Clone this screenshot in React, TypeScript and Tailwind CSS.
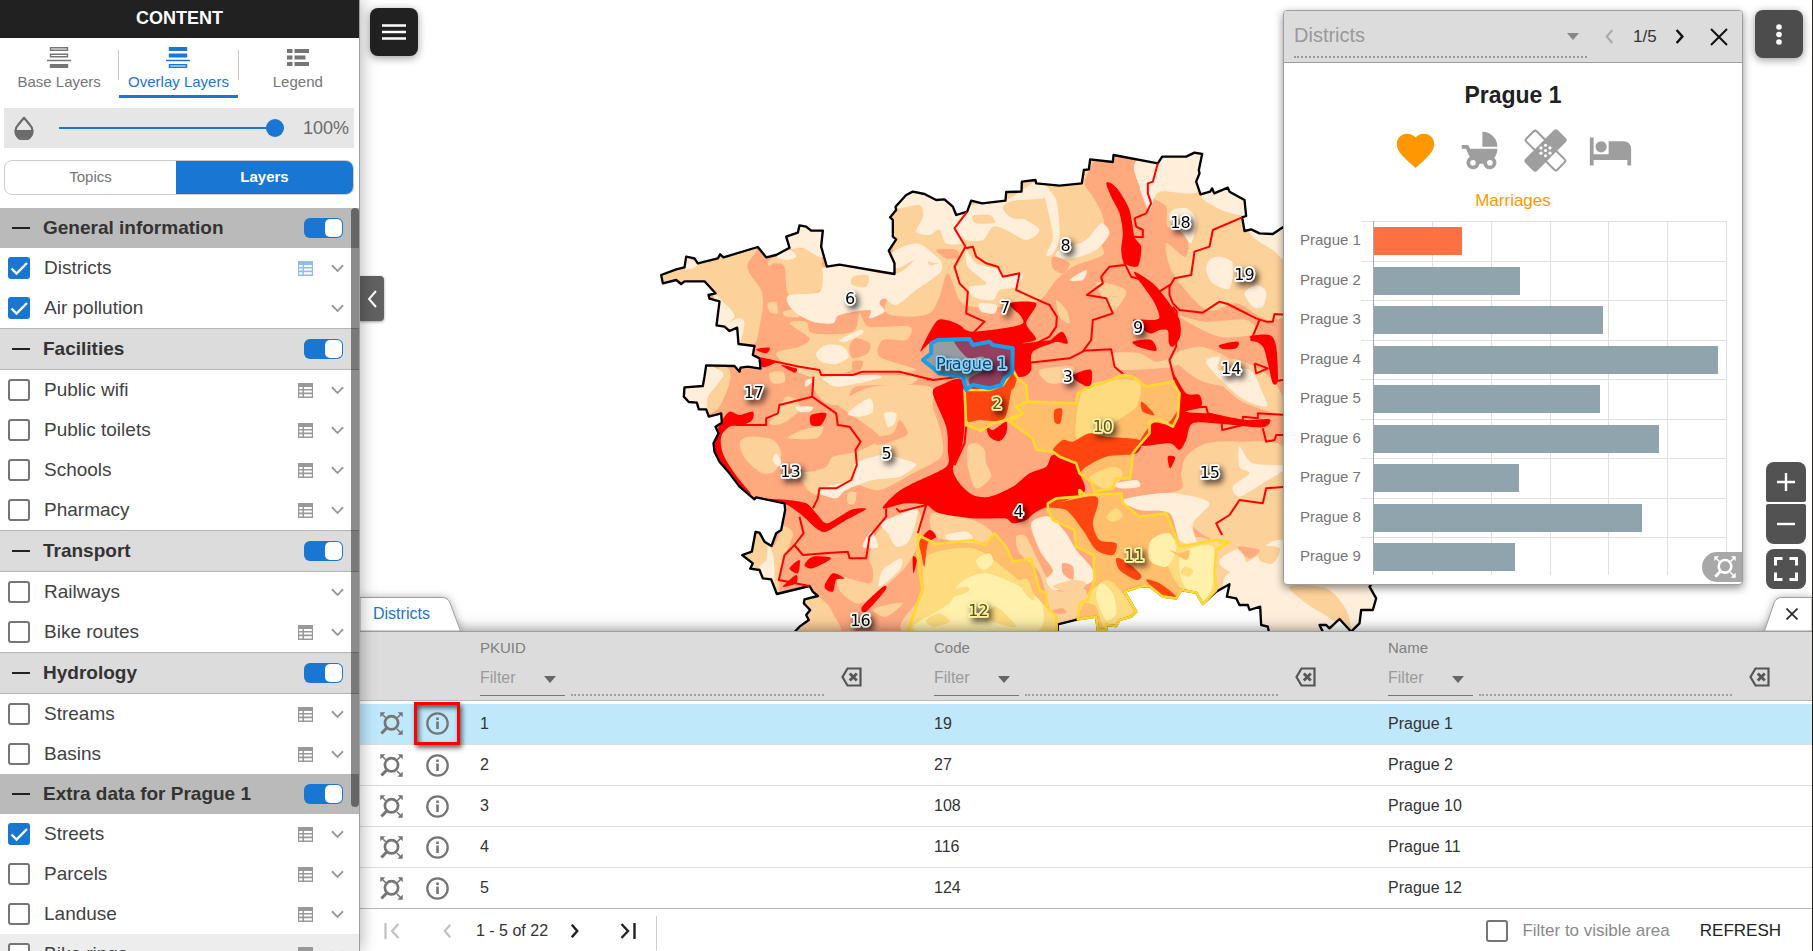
import React from "react";

/* ---------- map geometry helpers ---------- */

type Pt = [number, number];

const parse = (s: string): Pt[] =>
  s.trim().split(/\s+/).map((p) => p.split(",").map(Number) as Pt);

const line = (s: string) => "M" + s.trim().split(/\s+/).join("L");

function blob(s: string): string {
  const p = parse(s);
  const n = p.length;
  let d = `M${p[0][0]},${p[0][1]}`;
  for (let i = 0; i < n; i++) {
    const a = p[(i - 1 + n) % n];
    const b = p[i];
    const c = p[(i + 1) % n];
    const e = p[(i + 2) % n];
    const t = 7;
    d += `C${b[0] + (c[0] - a[0]) / t},${b[1] + (c[1] - a[1]) / t} ${c[0] - (e[0] - b[0]) / t},${c[1] - (e[1] - b[1]) / t} ${c[0]},${c[1]}`;
  }
  return d + "Z";
}

const OUTLINE =
  "65,405 70,430 110,420 125,432 135,424 195,424 228,460 207,465 210,476 240,484 231,556 255,560 270,573 293,563 297,612 345,618 340,645 360,655 363,686 325,680 303,683 300,695 285,678 200,676 195,710 190,738 135,742 133,770 148,786 172,788 178,808 200,808 208,830 245,820 247,848 228,860 237,880 222,910 225,935 240,965 270,1000 300,1040 345,1078 350,1072 435,1090 437,1110 425,1170 410,1180 396,1218 375,1205 360,1178 348,1176 337,1235 308,1245 340,1270 332,1286 360,1290 370,1315 395,1318 412,1362 510,1338 520,1355 535,1368 495,1378 493,1390 512,1410 500,1425 508,1440 480,1460 468,1473 468,1520 1255,1520 1255,1453 1315,1438 1370,1430 1375,1470 1400,1470 1400,1455 1430,1458 1440,1440 1475,1430 1490,1415 1455,1355 1500,1340 1530,1338 1570,1370 1610,1375 1625,1350 1670,1358 1690,1392 1730,1355 1770,1333 1762,1370 1790,1375 1800,1395 1825,1395 1830,1410 1862,1400 1865,1455 1885,1460 1888,1475 1888,1520 2060,1520 2050,1475 2040,1455 2060,1455 2070,1465 2100,1437 2135,1475 2160,1450 2165,1410 2200,1410 2210,1375 2190,1340 2300,1200 2300,500 1930,262 1900,282 1860,280 1835,268 1815,273 1808,232 1820,228 1815,180 1770,155 1765,143 1724,160 1718,145 1712,155 1683,163 1670,125 1680,100 1678,90 1688,42 1665,38 1640,50 1568,50 1555,70 1422,45 1420,66 1352,58 1348,88 1333,90 1327,130 1260,137 1190,130 1188,120 1147,125 1146,155 1100,156 1098,182 1028,190 995,182 983,215 950,225 940,200 915,178 890,180 855,162 820,155 800,165 768,200 770,210 752,232 760,240 760,290 770,298 748,332 765,370 765,402 600,374 562,380 545,320 550,272 515,272 500,260 480,256 475,278 440,290 450,323 410,345 380,352 355,321 252,352 242,343 235,355 175,370 165,355 140,350 135,382 110,388";

const TAN = [
  "50,400 240,350 350,325 325,370 330,400 365,450 370,500 360,560 345,612 290,620 240,520 195,424 70,440",
  "385,365 420,340 480,325 545,350 550,380 600,380 545,450 450,465 435,380 405,370 390,378",
  "750,150 1000,180 1340,50 1335,130 1360,170 1385,215 1395,260 1385,310 1390,345 1300,380 1250,420 1200,480 1100,500 1000,500 960,480 925,400 900,470 870,520 800,530 735,510 770,400",
  "1480,40 1600,60 1700,50 1950,250 1950,500 1900,540 1860,530 1790,490 1700,510 1600,400 1580,310 1640,350 1640,250 1585,260 1580,200 1540,170 1510,90",
  "450,550 500,545 520,580 640,575 660,520 690,560 810,560 800,600 730,600 720,650 830,690 700,700 640,690 560,720 460,690 410,640 480,620 510,595",
  "385,490 410,487 415,520 390,515",
  "430,515 460,510 480,530 440,530",
  "240,680 270,690 270,730 240,800 205,820 200,770",
  "390,700 430,695 435,725 400,730",
  "540,710 700,705 830,710 800,735 650,740 620,790 560,790 520,740",
  "420,800 440,770 470,780 480,810 430,850 390,850",
  "700,870 630,820 600,790 700,740 870,740 880,800 905,880 905,950 820,1000 720,1050 640,1030 600,1040 520,1060 490,1010 560,980 580,950 650,935 720,900",
  "300,910 330,890 400,900 425,940 410,990 370,1000 320,960",
  "445,895 490,870 550,860 530,895",
  "480,1000 600,1000 590,1040 530,1065",
  "625,1060 650,1058 645,1090 625,1090",
  "430,1160 460,1180 440,1240 420,1300 410,1370 300,1250 350,1170 400,1220",
  "510,1350 560,1390 580,1420 600,1480 460,1480 480,1380",
  "600,1310 690,1330 700,1290 690,1250 720,1170 830,1110 845,1170 830,1230 790,1290 700,1370 650,1390 600,1350",
  "700,1410 740,1395 790,1390 740,1430",
  "860,1250 1000,1225 1100,1290 1200,1380 1250,1480 800,1480 850,1360",
  "1130,1190 1160,1190 1190,1250 1250,1350 1340,1350 1310,1430 1250,1460 1200,1300 1140,1240",
  "985,920 1010,910 1035,930 1040,970 1055,1010 1010,1045 985,980",
  "880,1120 1000,1140 1060,1180 1020,1210 890,1190",
  "1330,750 1420,720 1500,730 1490,800 1420,850 1370,900 1310,890",
  "1350,1010 1420,980 1450,1000 1420,1050 1380,1040",
  "1600,1200 1660,1190 1720,1210 1730,1330 1700,1390 1620,1340 1580,1260",
  "1400,1130 1430,1105 1450,1130 1420,1145",
  "1330,1380 1400,1320 1450,1360 1490,1415 1400,1465 1370,1400",
  "1640,950 1700,910 1800,905 1940,930 1940,1180 1800,1200 1700,1190 1600,1110 1480,1080 1620,1050 1625,1000",
  "1720,1150 1800,1070 1940,1050 1940,1480 1700,1480",
  "1600,650 1680,620 1760,650 1800,700 1780,740 1680,720",
  "1620,530 1700,545 1820,540 1850,580 1740,590",
  "1370,430 1440,440 1460,460 1420,510",
  "1420,640 1500,640 1550,665 1620,650 1600,680 1440,690 1420,670",
  "1200,690 1300,680 1290,720 1230,730",
  "1700,670 1800,660 1900,720 1940,820 1800,780",
  "1250,480 1280,510 1290,550 1260,530",
  "1020,790 1060,780 1050,830 1025,820",
];

const SALMON = [
  "890,330 950,330 955,355 920,355",
  "1240,350 1290,370 1270,400 1240,385",
  "630,620 650,595 690,610 685,640 640,655",
  "640,665 670,665 660,695 640,695",
  "580,560 640,535 640,570 600,580",
  "700,895 760,880 780,840 805,880 770,900 715,915",
  "1270,1270 1300,1280 1300,1320 1270,1300",
  "1240,1410 1270,1405 1280,1420 1245,1420",
  "1590,1230 1620,1240 1650,1230 1640,1260",
  "1795,1220 1860,1230 1830,1255",
];

const CREAM = [
  "130,350 175,370 160,385 130,385",
  "200,430 235,470 275,510 285,530 270,545 300,535 315,550 300,615 285,580 215,570 225,480",
  "435,285 475,250 555,270 550,350 490,325 450,325",
  "410,348 450,330 470,350 440,360",
  "550,385 600,374 765,402 850,340 870,375 905,370 900,400 830,450 770,495 735,475 720,490 735,515 690,535 690,510 600,525 580,550 520,545 470,520 445,490 450,465 540,455 550,400",
  "765,170 820,150 900,175 940,205 980,220 960,240 945,270 965,310 920,310 900,270 870,285 830,275 850,230 840,195 775,205",
  "755,340 830,310 880,340 905,370 830,360 770,385",
  "530,640 560,615 610,620 628,650 590,672 545,665",
  "600,600 660,570 670,580 620,605",
  "130,745 195,700 200,676 240,690 250,710 205,770 200,810 150,795",
  "560,712 700,705 720,715 600,740 560,725",
  "470,800 520,800 510,815 480,815",
  "650,970 730,945 800,960 830,975 780,1010 700,1020 620,1050 590,1075 540,1060 560,1040 640,1020",
  "625,820 690,775 700,815 660,830",
  "735,820 770,820 765,850 745,860",
  "400,960 410,940 425,965 415,980",
  "385,1220 400,1240 405,1300 400,1350 370,1310 360,1280 380,1260",
  "725,1150 800,1115 835,1110 810,1200 770,1220 745,1180",
  "720,1340 730,1290 785,1255 780,1290",
  "670,1220 695,1175 715,1220",
  "920,1185 980,1175 1000,1200 930,1200",
  "1175,1150 1230,1130 1280,1180 1310,1230 1360,1290 1350,1330 1250,1350 1220,1320 1240,1290 1200,1230",
  "960,1330 1040,1300 1160,1350 1210,1400 1180,1480 900,1480 820,1460 930,1390",
  "1010,1260 1050,1240 1060,1270 1030,1290",
  "985,200 1100,180 1190,125 1230,150 1210,175 1110,185 1100,210 1150,235 1200,270 1160,300 1100,270 1060,260 1030,300 980,300 945,260",
  "1210,140 1250,180 1260,290 1240,340 1220,345 1240,290 1225,210",
  "980,330 1010,370 1080,390 1090,410 1150,400 1130,440 1080,450 1060,480 1000,470 990,440 1040,430 985,380",
  "1020,490 1070,495 1065,520 1025,515",
  "1320,310 1350,290 1385,250 1410,280 1370,330 1300,355 1250,350 1260,330",
  "1495,60 1690,40 1675,155 1560,155 1530,210 1500,140",
  "1600,210 1640,205 1670,240 1655,310 1630,280 1590,240",
  "1690,165 1765,140 1825,185 1820,225 1760,215 1700,185",
  "1820,240 1940,260 1940,360 1900,330 1840,290",
  "1710,360 1740,350 1780,370 1770,445 1720,430 1700,390",
  "1815,460 1850,435 1880,455 1870,500 1840,500",
  "1450,1080 1560,1060 1640,1065 1710,1090 1660,1150 1670,1210 1620,1200 1590,1120 1500,1110",
  "1800,920 1840,970 1940,980 1870,1030 1800,1070 1780,1040 1830,1000 1800,980",
  "1430,1030 1490,1020 1500,1040 1440,1045",
  "1625,1240 1720,1220 1720,1330 1690,1385 1630,1330",
  "1535,1200 1590,1180 1610,1230 1580,1280 1530,1260",
  "1385,1330 1420,1360 1430,1420 1400,1440 1370,1370",
  "1750,1330 1850,1250 1940,1200 2300,1300 2200,1530 1870,1480",
  "1740,1260 1800,1230 1830,1310 1760,1290",
  "1700,670 1740,650 1740,690 1830,690 1870,760 1880,800 1800,770",
  "500,720 530,715 500,740",
  "1290,420 1340,390 1330,420",
];

const TAN_OVER = [
  "640,410 685,406 680,440 638,434",
  "1000,228 1050,225 1065,248 1010,250",
  "1090,200 1140,180 1190,190 1190,230 1120,235",
  "920,1355 980,1340 985,1355 930,1372",
  "1040,1430 1070,1400 1130,1460 1060,1445",
  "1140,1325 1165,1320 1185,1380 1160,1365",
  "860,1440 900,1420 930,1445 880,1460",
  "1635,1280 1660,1290 1650,1310 1625,1300",
  "1950,1340 2060,1345 2120,1410 2132,1480 2080,1440 2000,1390",
  "1860,1220 1920,1225 1900,1270 1860,1260",
  "1240,1340 1300,1320 1340,1330 1310,1360",
];

const RED = [
  "843,633 890,545 925,541 960,555 1000,575 1140,555 1145,530 1110,490 1190,490 1160,550 1190,597 1150,610 1260,600 1180,635 1175,690 1150,710 1110,700 1110,620 980,600 880,605",
  "945,600 1000,590 1130,615 1125,740 1060,760 1000,740 990,715 1050,680 1030,650 990,655 965,635",
  "730,1105 770,1060 820,1030 920,980 925,930 920,860 880,760 905,735 970,722 975,850 965,930 940,985 960,1030 1000,1065 1050,1070 1120,1040 1170,1000 1220,980 1240,945 1300,950 1320,990 1325,1010 1330,1060 1200,1110 1160,1140 1120,1150 1095,1135 1000,1135 900,1120 860,1095 800,1090",
  "245,845 270,815 300,825 340,815 338,840 310,855 270,860 245,890 250,940 285,1000 330,1055 345,1072 445,1080 500,1090 530,1120 560,1150 600,1130 640,1108 680,1107 620,1140 560,1175 530,1165 480,1120 430,1090 340,1080 270,1000 225,930 230,880",
  "1400,130 1415,130 1440,155 1470,210 1485,290 1505,320 1495,378 1455,370 1445,330 1450,280 1440,220 1415,170",
  "1483,397 1540,430 1590,490 1620,540 1622,590 1600,620 1588,610 1585,572 1560,570 1530,580 1480,540 1540,540 1560,530 1540,480",
  "1480,605 1535,600 1550,632 1500,622",
  "1830,590 1890,585 1910,620 1915,720 1900,730 1885,670 1870,620",
  "1740,615 1795,605 1790,625 1750,627",
  "1600,700 1640,760 1680,765 1685,800 1640,815 1720,822 1820,840 1890,838 1870,862 1750,852 1660,850 1640,900 1620,930 1590,910 1500,915 1540,850 1585,850 1620,790",
  "1240,930 1270,900 1300,905 1350,880 1400,890 1500,900 1490,940 1400,950 1340,980 1310,1000 1250,950",
  "1220,1100 1370,1070 1360,1150 1380,1200 1430,1210 1420,1245 1370,1230 1330,1170 1280,1110",
  "1430,1255 1460,1265 1505,1305 1490,1320 1440,1290",
  "1520,1320 1560,1330 1610,1370 1560,1360",
  "975,750 1060,735 1115,715 1110,780 1090,840 1020,840 980,840",
  "1040,855 1060,870 1100,845 1100,880 1080,903 1050,890",
  "1245,810 1268,808 1262,850 1245,845",
  "1505,785 1525,800 1545,825 1510,815",
  "350,628 390,623 380,640",
  "365,655 410,665 370,682",
  "425,675 470,685 465,698",
  "668,1400 730,1340 738,1350 680,1415",
  "555,1340 580,1300 615,1315 590,1320 580,1355",
  "495,1275 520,1250 575,1255 520,1285",
  "450,1285 480,1260 475,1300",
  "430,1340 470,1305 470,1330",
  "515,825 560,820 545,855 515,855",
  "820,1250 832,1260 822,1300",
  "840,1205 870,1170 890,1190 865,1210 855,1280 845,1240",
  "1310,700 1355,690 1350,740 1300,715",
  "1230,605 1268,575 1285,610 1255,605",
  "1585,950 1607,952 1592,985",
  "860,715 875,715 865,722",
];

const RED_LINES = [
  "983,215 945,265 978,320 945,380 960,430 985,455 980,520 1035,545 1000,580",
  "978,325 1000,320 1010,350 1040,370 1075,380 1090,410 1140,400 1130,450 1185,475 1230,495 1252,530 1250,560 1230,590 1170,620",
  "1555,70 1540,125 1525,130 1525,160 1535,190 1520,220 1485,235 1490,260 1510,270 1510,292 1480,290",
  "1455,350 1455,375 1410,380 1385,410 1390,430 1342,465 1400,475 1420,520 1360,540 1355,600 1330,635 1290,655 1170,668",
  "1455,370 1475,410 1510,420 1560,455 1590,435 1590,465 1600,490 1620,510 1690,518 1740,485 1765,492 1850,535 1880,545 1900,545 1905,522 1940,524",
  "1808,232 1720,270 1710,320 1665,335 1655,405 1605,415 1590,440",
  "1600,500 1612,515 1610,620 1590,660 1605,720",
  "1330,632 1415,628 1425,680 1455,705",
  "1860,540 1835,600 1870,605",
  "1845,670 1885,685 1850,700 1845,670",
  "1900,725 1940,718",
  "363,655 480,680 540,690 545,705 640,705 670,695 780,695 880,720 960,710",
  "522,710 518,770 420,795 415,820 380,835 380,855 290,855",
  "518,770 590,820 595,855 630,860 663,905 648,930 652,975 635,1020 590,1045 540,1045 535,1075 520,1105",
  "480,1130 492,1180 465,1215 490,1245 555,1240 625,1235 630,1255 680,1255 690,1190 715,1160 740,1130 740,1105",
  "465,1215 435,1245 418,1320 510,1338",
  "770,1105 780,1115 860,1095 835,1180",
  "980,860 975,910 945,975",
  "1635,805 1700,800 1705,820 1745,830 1748,870 1810,855 1810,830 1855,835 1855,820 1940,825",
  "1870,865 1880,905 1905,900 1910,885 1940,885",
  "1940,1040 1880,1045 1870,1090 1800,1080 1770,1125 1730,1150 1748,1185",
];

const YELLOW = [
  "1165,785 1310,790 1315,760 1340,745 1400,725 1450,705 1480,710 1520,740 1600,725 1620,760 1615,830 1600,860 1560,840 1530,845 1530,880 1500,915 1480,940 1472,1015 1430,1015 1420,1045 1365,1055 1355,1025 1320,1000 1310,970 1260,950 1240,935 1190,930 1180,895 1110,845 1150,820 1130,800",
  "975,750 1050,750 1090,735 1120,690 1135,715 1160,735 1165,785 1130,800 1150,820 1100,840 1060,850 1025,872 980,855",
  "1225,1090 1250,1075 1320,1070 1320,1050 1335,1065 1445,1060 1450,1090 1500,1130 1580,1120 1600,1170 1620,1220 1730,1200 1770,1205 1730,1230 1725,1300 1730,1350 1690,1392 1670,1358 1625,1350 1610,1375 1570,1370 1530,1338 1500,1340 1455,1355 1490,1415 1475,1430 1440,1440 1430,1458 1400,1455 1400,1470 1375,1470 1370,1430 1315,1438 1320,1390 1345,1380 1365,1320 1362,1245 1310,1220 1305,1170 1240,1140 1225,1110",
  "835,1185 890,1212 1000,1200 1035,1215 1065,1180 1100,1220 1120,1265 1175,1255 1200,1350 1220,1360 1222,1400 1250,1430 1255,1520 790,1520 830,1400 848,1350 835,1250",
];

const PRAGUE1 =
  "875,610 895,600 990,597 1000,615 1050,605 1060,615 1120,625 1118,695 1095,715 1085,735 1050,745 1000,735 980,750 970,710 900,700 875,680 850,660 875,640";

const LABELS: [string, number, number, string][] = [
  ["6", 632, 476, "#000"],
  ["18", 1623, 248, "#000"],
  ["8", 1278, 316, "#000"],
  ["7", 1097, 502, "#000"],
  ["9", 1496, 563, "#000"],
  ["19", 1815, 405, "#000"],
  ["14", 1775, 685, "#000"],
  ["3", 1285, 711, "#000"],
  ["17", 343, 757, "#000"],
  ["5", 741, 942, "#000"],
  ["13", 453, 995, "#000"],
  ["16", 663, 1443, "#000"],
  ["4", 1137, 1115, "#000"],
  ["15", 1711, 998, "#000"],
  ["2", 1073, 792, "#5b5514"],
  ["10", 1390, 860, "#5b5514"],
  ["11", 1484, 1246, "#5b5514"],
  ["12", 1017, 1413, "#5b5514"],
  ["Prague 1", 996, 672, "#0e4a6b"],
];

const halo = (c: string) => (c === "#000" ? "#fff" : c === "#0e4a6b" ? "#8fd3fa" : "#fff3a6");

function PragueMap() {
  return (
    <svg
      className="absolute inset-0 h-full w-full"
      viewBox="-840 -420 4359 1893"
      preserveAspectRatio="xMidYMid slice"
      role="img"
      aria-label="Map of Prague districts"
    >
      <defs>
        <clipPath id="city">
          <path d={line(OUTLINE) + "Z"} />
        </clipPath>
        <filter id="label-shadow" x="-100%" y="-50%" width="300%" height="250%">
          <feDropShadow dx="9" dy="11" stdDeviation="9" floodColor="#000" floodOpacity="0.75" />
        </filter>
      </defs>
      <g clipPath="url(#city)">
        <path d={line(OUTLINE) + "Z"} fill="#ffa97f" />
        {TAN.map((s) => <path key={s} d={blob(s)} fill="#fdd19a" />)}
        {CREAM.map((s) => <path key={s} d={blob(s)} fill="#ffeeda" />)}
        {TAN_OVER.map((s) => <path key={s} d={blob(s)} fill="#fdd19a" />)}
        {SALMON.map((s) => <path key={s} d={blob(s)} fill="#ffa97f" />)}
        {RED.map((s) => <path key={s} d={blob(s)} fill="#f00" />)}
      </g>
      <path d={line(OUTLINE) + "Z"} fill="none" stroke="#000" strokeWidth="7" strokeLinejoin="round" />
      <g fill="none" stroke="#f00" strokeWidth="6" strokeLinejoin="round">
        {RED_LINES.map((s) => <path key={s} d={line(s)} />)}
      </g>
      <g fill="#fff638" fillOpacity="0.284" stroke="#ffd92f" strokeWidth="8" strokeLinejoin="round">
        {YELLOW.map((s) => <path key={s} d={line(s) + "Z"} />)}
      </g>
      <path d={line(PRAGUE1) + "Z"} fill="#168ed5" fillOpacity="0.45" stroke="#1c9fe6" strokeWidth="12" strokeLinejoin="round" />
      <g fontFamily="'DejaVu Sans', sans-serif" fontSize="48" textAnchor="middle">
        {LABELS.map(([t, x, y, c]) => (
          <text key={t} x={x} y={y + 16} fill={c} stroke={halo(c)} strokeWidth="10" strokeLinejoin="round" paintOrder="stroke" filter="url(#label-shadow)">
            {t}
          </text>
        ))}
      </g>
    </svg>
  );
}

/* ---------- icons ---------- */

const Chevron = ({ dir, className, w = 2 }: { dir: "left" | "right" | "down"; className: string; w?: number }) => {
  const d = { left: "M9 1L2 9l7 8", right: "M2 1l7 8-7 8", down: "M1 1l6 6 6-6" }[dir];
  return (
    <svg className={className} viewBox={dir === "down" ? "0 0 14 9" : "0 0 11 18"} fill="none" stroke="currentColor" strokeWidth={w}>
      <path d={d} />
    </svg>
  );
};

const Caret = ({ className }: { className: string }) => (
  <svg className={className} viewBox="0 0 12 7" fill="currentColor">
    <path d="M0 0h12L6 7z" />
  </svg>
);

const ZoomTo = ({ className }: { className: string }) => (
  <svg className={className} viewBox="0 0 23 23" fill="none" stroke="currentColor">
    <circle cx="11.5" cy="10.8" r="6.6" strokeWidth="2.7" />
    <path d="M7.2 15.4l-5.800 6.200" strokeWidth="3" />
    <path d="M1.500 1.500l4.200 4.200M21.500 1.500l-4.200 4.200M21.500 21.500l-4.500-4.500" strokeWidth="1.600" />
    <path d="M.3.3h5l-5 5zM22.700.3v5l-5-5zM22.700 22.700h-5.200l5.200-5.200z" fill="currentColor" stroke="none" />
  </svg>
);

const Info = ({ className }: { className: string }) => (
  <svg className={className} viewBox="0 0 23 23" fill="none" stroke="currentColor">
    <circle cx="11.5" cy="11.5" r="10.2" strokeWidth="2.3" />
    <path d="M11.500 9.500v7.500M11.500 5.500v2.500" strokeWidth="2.600" />
  </svg>
);

const TableIcon = ({ className }: { className: string }) => (
  <svg className={className} viewBox="0 0 15 15">
    <path d="M0 0h15v15H0z" fill="currentColor" />
    <path d="M1.200 4h3.300v2H1.200zM6 4h7.800v2H6zM1.200 7.500h3.300v2H1.200zM6 7.500h7.800v2H6zM1.200 11.200h3.300v2.300H1.200zM6 11.200h7.800v2.300H6z" fill="#fff" />
  </svg>
);

const Backspace = () => (
  <svg className="h-[20px] w-[21px]" viewBox="0 0 21 20" fill="none" stroke="#555" strokeWidth="2.200">
    <path d="M6.500 1.500H19.500v17H6.500L1.500 10z" />
    <path d="M8.800 6.500l7 7M15.800 6.500l-7 7" strokeWidth="2.800" />
  </svg>
);

/* ---------- controls ---------- */

function Check({ id, checked }: { id: string; checked?: boolean }) {
  return (
    <span className="relative flex h-[22px] w-[22px] shrink-0">
      <input
        id={id}
        type="checkbox"
        defaultChecked={checked}
        className="peer h-[22px] w-[22px] appearance-none rounded-[3px] border-2 border-[#757575] bg-white checked:border-[#1976d2] checked:bg-[#1976d2]"
      />
      <svg className="pointer-events-none absolute inset-0 hidden peer-checked:block" viewBox="0 0 22 22" fill="none" stroke="#fff" strokeWidth="2.400">
        <path d="M3.500 11.500l5 5L19 6" />
      </svg>
    </span>
  );
}

type Row = { name: string; checked?: boolean; table?: "blue" | "gray" };
type Group = { name: string; dark?: boolean; rows: Row[] };

const GROUPS: Group[] = [
  { name: "General information", dark: true, rows: [{ name: "Districts", checked: true, table: "blue" }, { name: "Air pollution", checked: true }] },
  {
    name: "Facilities",
    rows: [
      { name: "Public wifi", table: "gray" },
      { name: "Public toilets", table: "gray" },
      { name: "Schools", table: "gray" },
      { name: "Pharmacy", table: "gray" },
    ],
  },
  { name: "Transport", rows: [{ name: "Railways" }, { name: "Bike routes", table: "gray" }] },
  { name: "Hydrology", rows: [{ name: "Streams", table: "gray" }, { name: "Basins", table: "gray" }] },
  {
    name: "Extra data for Prague 1",
    dark: true,
    rows: [
      { name: "Streets", checked: true, table: "gray" },
      { name: "Parcels", table: "gray" },
      { name: "Landuse", table: "gray" },
      { name: "Bike rings", table: "gray" },
    ],
  },
];

function LayerGroup({ group }: { group: Group }) {
  return (
    <section>
      <header
        className={
          group.dark
            ? "flex h-10 items-center bg-[#bababa] pl-3 pr-4"
            : "flex h-[42px] items-center border-y border-[#b5b5b5] bg-[#dcdcdc] pl-3 pr-4"
        }
      >
        <button aria-label={"Collapse " + group.name} className="h-5 w-[18px]">
          <span className="block h-[2px] bg-[#212121]" />
        </button>
        <h2 className="ml-[13px] flex-1 text-[19px] font-bold leading-6 text-[#333]">{group.name}</h2>
        <input
          type="checkbox"
          role="switch"
          aria-label={group.name}
          defaultChecked
          className="flex h-5 w-[39px] appearance-none items-center rounded-[6px] bg-[#999] px-px before:block before:h-[18px] before:w-[17px] before:rounded-[5px] before:bg-white before:content-[''] checked:justify-end checked:bg-[#1976d2]"
        />
      </header>
      <ul>
        {group.rows.map((r) => (
          <li
            key={r.name}
            className={
              r.name === "Bike rings"
                ? "flex h-10 items-center bg-[#ededed] pl-2 pr-[15px]"
                : "flex h-10 items-center bg-white pl-2 pr-[15px]"
            }
          >
            <Check id={"layer-" + r.name} checked={r.checked} />
            <label htmlFor={"layer-" + r.name} className="ml-[14px] flex-1 text-[19px] leading-6 text-[#424242]">
              {r.name}
            </label>
            {r.table && (
              <button aria-label={"Table of " + r.name}>
                <TableIcon className={r.table === "blue" ? "h-[15px] w-[15px] text-[#90bdee]" : "h-[15px] w-[15px] text-[#999]"} />
              </button>
            )}
            <button aria-label={"Details of " + r.name} className="ml-[18px]">
              <Chevron dir="down" className="h-[9px] w-[13px] text-[#999]" />
            </button>
          </li>
        ))}
      </ul>
    </section>
  );
}

function Sidebar() {
  return (
    <aside className="relative z-20 flex h-full w-[360px] shrink-0 flex-col border-r border-[#9e9e9e] bg-white shadow-[0_0_16px_rgba(0,0,0,0.35)]">
      <h1 className="flex h-[38px] shrink-0 items-center justify-center bg-[#212121] pb-[2px] text-[18px] font-bold text-white">CONTENT</h1>
      <nav className="flex h-[60px] shrink-0 pr-[2px] text-[15px] text-[#757575]">
        <button className="flex flex-1 flex-col items-center pt-[9px]">
          <svg className="h-[21px] w-6" viewBox="0 0 24 21" fill="none" stroke="currentColor">
            <path d="M3.500.7h17v2.600h-17zM3.500 7.200h17v2.600h-17z" strokeWidth="1.400" />
            <path d="M0 13.500h24" strokeWidth="1.500" />
            <path d="M2.800 17h18.400v4H2.800z" fill="currentColor" stroke="none" />
          </svg>
          <span className="mt-1 leading-5">Base Layers</span>
        </button>
        <span className="mt-3 h-[30px] w-px bg-[#c8c8c8]" />
        <button className="flex flex-1 flex-col items-center border-b-[3px] border-[#1976d2] pt-[9px] text-[#1976d2]">
          <svg className="h-[21px] w-6" viewBox="0 0 24 21" fill="none" stroke="currentColor">
            <path d="M2.800 0h18.400v4H2.800zM2.800 6.500h18.400v4H2.800z" fill="currentColor" stroke="none" />
            <path d="M0 13.500h24" strokeWidth="1.500" />
            <path d="M3.500 17.700h17v2.600h-17z" strokeWidth="1.400" />
          </svg>
          <span className="mt-1 leading-5">Overlay Layers</span>
        </button>
        <span className="mt-3 h-[30px] w-px bg-[#c8c8c8]" />
        <button className="flex flex-1 flex-col items-center pt-[9px]">
          <svg className="h-[21px] w-6" viewBox="0 0 24 21" fill="currentColor">
            <path d="M1 2h5.500v4H1zM8.500 2H23v4H8.500zM1 8.500h5.500v4H1zM8.500 8.500h11v4h-11zM1 15h5.500v4H1zM8.500 15H23v4H8.500z" />
          </svg>
          <span className="mt-1 leading-5">Legend</span>
        </button>
      </nav>
      <div className="ml-1 mr-[5px] mt-[10px] flex h-10 shrink-0 items-center bg-[#e6e6e6] pl-[10px] pr-[5px]">
        <svg className="h-6 w-5" viewBox="0 0 20 24" fill="none">
          <path d="M10 1.800L4 9a8.600 8.600 0 1 0 12 0z" stroke="#6b6b6b" strokeWidth="2.200" strokeLinejoin="round" />
          <path d="M1 14h18A9 9 0 0 1 1 14z" fill="#6b6b6b" />
        </svg>
        <input
          type="range"
          aria-label="Opacity"
          defaultValue={100}
          className="ml-[25px] h-[2px] w-[225px] appearance-none bg-[#1976d2] [&::-webkit-slider-thumb]:h-[18px] [&::-webkit-slider-thumb]:w-[18px] [&::-webkit-slider-thumb]:appearance-none [&::-webkit-slider-thumb]:rounded-full [&::-webkit-slider-thumb]:bg-[#1976d2]"
        />
        <output className="flex-1 text-right text-[18px] leading-6 text-[#6b6b6b]">100%</output>
      </div>
      <div className="mb-[13px] ml-1 mr-[5px] mt-3 flex h-[35px] shrink-0 overflow-hidden rounded-lg border border-[#ccc] text-[15px]">
        <button className="w-[171px] text-[#757575]">Topics</button>
        <button className="flex-1 bg-[#1976d2] font-bold text-white">Layers</button>
      </div>
      <div className="relative min-h-0 flex-1 overflow-hidden">
        {GROUPS.map((g) => (
          <LayerGroup key={g.name} group={g} />
        ))}
        <div className="absolute right-0 top-0 h-[599px] w-2 rounded bg-black/45" />
      </div>
    </aside>
  );
}

/* ---------- district card ---------- */

const BARS = [88, 146, 229, 344, 226, 285, 145, 268, 141];

function Chart() {
  return (
    <svg className="mx-auto mt-2 block h-[356px] w-[432px]" viewBox="0 0 432 356" role="img" aria-label="Marriages by district">
      <g stroke="#e0e0e0">
        {[0, 39.5, 79, 118.5, 158, 197.5, 237, 276.5, 316].map((y) => (
          <path key={y} d={`M64 ${Math.round(y) + 0.5}H429`} />
        ))}
        {[135, 194, 253, 311, 370, 429].map((x) => (
          <path key={x} d={`M${x + 0.5} 0V354`} />
        ))}
      </g>
      <path d="M76.500 0V354" stroke="#aaa" />
      {BARS.map((w, i) => (
        <g key={i}>
          <rect x="77" y={Math.round(i * 39.5) + 6} width={w} height="28" fill={i === 0 ? "#ff7043" : "#90a4ae"} />
          <text x="3" y={Math.round(i * 39.5) + 24} fontSize="15" fill="#757575">
            Prague {i + 1}
          </text>
        </g>
      ))}
    </svg>
  );
}

function DistrictCard() {
  return (
    <article className="absolute bottom-[46px] right-[69px] top-[10px] flex w-[460px] flex-col overflow-hidden rounded-[4px] border border-[#9e9e9e] bg-white shadow-[0_3px_8px_rgba(0,0,0,0.45)]">
      <header className="flex h-[52px] shrink-0 items-center border-b border-[#9e9e9e] bg-[#dcdcdc] pl-[10px] pr-[14px]">
        <div className="relative mt-[2px] w-[293px] self-stretch pb-1">
          <select aria-label="Layer" className="h-full w-full appearance-none border-b-2 border-dotted border-[#999] bg-transparent text-[20px] text-[#999] opacity-100">
            <option>Districts</option>
          </select>
          <Caret className="pointer-events-none absolute right-2 top-5 h-[7px] w-3 text-[#888]" />
        </div>
        <button aria-label="Previous feature" className="ml-[18px]">
          <Chevron dir="left" className="h-[15px] w-[9px] text-[#aaa]" w={2.5} />
        </button>
        <span className="ml-[19px] text-[17px] leading-6 text-[#333]">1/5</span>
        <button aria-label="Next feature" className="ml-[18px]">
          <Chevron dir="right" className="h-[15px] w-[9px] text-[#111]" w={3} />
        </button>
        <button aria-label="Close" className="ml-auto">
          <svg className="h-[18px] w-[18px]" viewBox="0 0 18 18" stroke="#111" strokeWidth="2">
            <path d="M1 1l16 16M17 1L1 17" />
          </svg>
        </button>
      </header>
      <h2 className="mt-[18px] text-center text-[23px] font-bold leading-7 text-[#212121]">Prague 1</h2>
      <div className="mt-[19px] flex justify-center gap-5 text-[#9e9e9e]">
        <button aria-label="Marriages" className="text-[#ff9800]">
          <svg className="h-[45px] w-[45px]" viewBox="0 0 24 24" fill="currentColor">
            <path d="M12,21.350L10.550,20.030C5.400,15.360 2,12.270 2,8.500C2,5.410 4.420,3 7.500,3C9.240,3 10.910,3.810 12,5.080C13.090,3.810 14.760,3 16.500,3C19.580,3 22,5.410 22,8.500C22,12.270 18.600,15.360 13.450,20.030L12,21.350Z" />
          </svg>
        </button>
        <button aria-label="Births">
          <svg className="h-[45px] w-[45px]" viewBox="0 0 24 24" fill="currentColor">
            <path d="M13,2V10H21A8,8 0 0,0 13,2M19.320,15.890C20.370,14.540 21,12.840 21,11H6.440L5.500,9H2V11H4.220C4.220,11 6.110,15.070 6.340,15.420C5.240,16 4.500,17.170 4.500,18.500A3.500,3.500 0 0,0 8,22C9.760,22 11.220,20.700 11.460,19H13.540C13.780,20.700 15.240,22 17,22A3.500,3.500 0 0,0 20.500,18.500C20.500,17.460 20.040,16.530 19.320,15.890M8,20A1.500,1.500 0 0,1 6.500,18.500A1.500,1.500 0 0,1 8,17A1.500,1.500 0 0,1 9.500,18.500A1.500,1.500 0 0,1 8,20M17,20A1.500,1.500 0 0,1 15.500,18.500A1.500,1.500 0 0,1 17,17A1.500,1.500 0 0,1 18.500,18.500A1.500,1.500 0 0,1 17,20Z" />
          </svg>
        </button>
        <button aria-label="Injuries">
          <svg className="h-[45px] w-[45px]" viewBox="0 0 24 24" fill="currentColor">
            <rect x="0.300" y="8.100" width="23.400" height="7.800" rx="1.300" transform="rotate(45 12 12)" fill="none" stroke="currentColor" strokeWidth="1.100" />
            <rect x="-0.300" y="7.500" width="24.600" height="9" rx="1.600" transform="rotate(-45 12 12)" />
            <g fill="#fff">
              <circle cx="12" cy="9.200" r="0.850" />
              <circle cx="12" cy="14.800" r="0.850" />
              <circle cx="9.600" cy="10.600" r="0.850" />
              <circle cx="14.400" cy="10.600" r="0.850" />
              <circle cx="9.600" cy="13.400" r="0.850" />
              <circle cx="14.400" cy="13.400" r="0.850" />
              <circle cx="12" cy="12" r="0.850" />
            </g>
          </svg>
        </button>
        <button aria-label="Hospital beds">
          <svg className="h-[45px] w-[45px]" viewBox="0 0 24 24" fill="currentColor">
            <path d="M19,7H11V14H3V5H1V20H3V17H21V20H23V11A4,4 0 0,0 19,7M7,13A3,3 0 0,0 10,10A3,3 0 0,0 7,7A3,3 0 0,0 4,10A3,3 0 0,0 7,13Z" />
          </svg>
        </button>
      </div>
      <h3 className="mt-4 text-center text-[17px] leading-6 text-[#ff9800]">Marriages</h3>
      <Chart />
      <button aria-label="Zoom to feature" className="absolute bottom-[2px] right-0 flex h-[30px] w-10 items-center rounded-l-full bg-[#9e9e9e]/90 pl-3 text-white">
        <ZoomTo className="h-[22px] w-[22px]" />
      </button>
    </article>
  );
}

/* ---------- attribute table ---------- */

const COLUMNS = ["PKUID", "Code", "Name"];
const DATA = [
  ["1", "19", "Prague 1"],
  ["2", "27", "Prague 2"],
  ["3", "108", "Prague 10"],
  ["4", "116", "Prague 11"],
  ["5", "124", "Prague 12"],
];

function AttributeTable() {
  return (
    <section className="relative z-10 shrink-0 bg-white shadow-[0_0_14px_rgba(0,0,0,0.5)]">
      <button className="absolute -top-[34px] left-0 h-[34px] w-[101px] text-left text-[16px] text-[#1976d2]">
        <svg className="absolute inset-0 h-[34px] w-[101px] overflow-visible drop-shadow-[0_0_4px_rgba(0,0,0,0.3)]" viewBox="0 0 101 34" aria-hidden="true">
          <path d="M0 .5H82Q88 .5 90 6L100.500 34H0z" fill="#fff" stroke="#9e9e9e" />
        </svg>
        <span className="relative pl-[13px]">Districts</span>
      </button>
      <button aria-label="Close table" className="absolute -top-[34px] right-0 flex h-[34px] w-[48px] items-center justify-center pl-2">
        <svg className="absolute inset-0 h-[34px] w-[48px] drop-shadow-[0_0_4px_rgba(0,0,0,0.3)]" viewBox="0 0 48 34" aria-hidden="true">
          <path d="M48 .5H18Q12 .5 10 6L.5 34H48z" fill="#fff" stroke="#9e9e9e" />
        </svg>
        <svg className="relative h-3 w-3" viewBox="0 0 12 12" stroke="#222" strokeWidth="1.600">
          <path d="M.5.5l11 11M11.500.5l-11 11" />
        </svg>
      </button>
      <table className="relative w-full table-fixed border-collapse text-left text-[16px]">
        <colgroup>
          <col className="w-[120px]" />
          <col className="w-[454px]" />
          <col className="w-[454px]" />
          <col />
        </colgroup>
        <thead>
          <tr className="h-[69px] border-b border-t border-b-[#bbb] border-t-[#9e9e9e] bg-[#dcdcdc]">
            <td />
            {COLUMNS.map((c) => (
              <th key={c} className="p-0 align-top font-normal">
                <div className="pt-[6px] text-[15px] leading-5 text-[#808080]">{c}</div>
                <div className="mt-[2px] flex items-center">
                  <div className="relative w-[85px]">
                    <select aria-label={c + " filter type"} className="h-9 w-full appearance-none border-b border-[#757575] bg-transparent text-[16px] text-[#9a9a9a]">
                      <option>Filter</option>
                    </select>
                    <Caret className="pointer-events-none absolute right-[9px] top-4 h-[7px] w-3 text-[#666]" />
                  </div>
                  <input aria-label={c + " filter value"} className="ml-[6px] h-9 w-[253px] border-b-2 border-dotted border-[#a0a0a0] bg-transparent" />
                  <button aria-label={"Clear " + c + " filter"} className="ml-[17px] pb-[2px]">
                    <Backspace />
                  </button>
                </div>
              </th>
            ))}
          </tr>
        </thead>
        <tbody>
          <tr className="h-[3px]" aria-hidden="true">
            <td colSpan={4} className="p-0" />
          </tr>
          {DATA.map((r, i) => (
            <tr key={r[0]} className={i === 0 ? "h-[41px] border-b border-[#ddd] bg-[#bfe8fb]" : i === 4 ? "h-[41px] border-b border-[#bbb]" : "h-[41px] border-b border-[#ddd]"}>
              <td className="p-0">
                <div className="flex items-center pl-5 text-[#757575]">
                  <button aria-label={"Zoom to " + r[2]} className="mr-[11px]">
                    <ZoomTo className="h-[23px] w-[23px]" />
                  </button>
                  <button
                    aria-label={"Details of " + r[2]}
                    className={
                      i === 0
                        ? "-my-2 flex h-[43px] w-[46px] items-center justify-center border-[3px] border-[#f00] shadow-[2px_3px_5px_rgba(0,0,0,0.6),inset_2px_3px_5px_rgba(0,0,0,0.6)]"
                        : "flex w-[46px] items-center justify-center"
                    }
                  >
                    <Info className="h-[23px] w-[23px]" />
                  </button>
                </div>
              </td>
              {r.map((v, j) => (
                <td key={j} className="p-0 text-[#333]">
                  {v}
                </td>
              ))}
            </tr>
          ))}
        </tbody>
      </table>
      <footer className="flex h-[42px] items-center pl-6 pr-[31px] pt-[2px] text-[#222]">
        <button aria-label="First page" className="flex items-center text-[#c0c0c0]">
          <svg className="h-4 w-4" viewBox="0 0 16 16" fill="none" stroke="currentColor" strokeWidth="2.200">
            <path d="M1.500 0v16M14.500 1L8 8l6.500 7" />
          </svg>
        </button>
        <button aria-label="Previous page" className="ml-[43px] text-[#c0c0c0]">
          <Chevron dir="left" className="h-[14px] w-[9px]" w={2.8} />
        </button>
        <span className="ml-6 text-[16px] text-[#333]">1 - 5 of 22</span>
        <button aria-label="Next page" className="ml-[22px]">
          <Chevron dir="right" className="h-[14px] w-[9px]" w={3.2} />
        </button>
        <button aria-label="Last page" className="ml-[41px]">
          <svg className="h-4 w-4" viewBox="0 0 16 16" fill="none" stroke="currentColor" strokeWidth="2.400">
            <path d="M14.500 0v16M1.500 1L8 8l-6.500 7" />
          </svg>
        </button>
        <span className="ml-5 mt-1 h-[34px] w-px bg-[#ccc]" />
        <div className="ml-auto flex items-center">
          <Check id="visible-area" />
          <label htmlFor="visible-area" className="ml-[14px] text-[17px] text-[#8a8a8a]">
            Filter to visible area
          </label>
        </div>
        <button className="ml-[30px] text-[17px] text-[#222]">REFRESH</button>
      </footer>
    </section>
  );
}

/* ---------- page ---------- */

export default function App() {
  return (
    <div className="flex h-screen overflow-hidden bg-white font-['Liberation_Sans',Arial,sans-serif]">
      <Sidebar />
      <main className="relative flex min-w-0 flex-1 flex-col border-r border-[#2b211e]">
        <div className="relative min-h-0 flex-1 overflow-hidden">
          <PragueMap />
          <button aria-label="Menu" className="absolute left-[10px] top-2 flex h-12 w-12 items-center justify-center rounded-lg bg-[#212121] shadow-[0_2px_8px_rgba(0,0,0,0.4)]">
            <svg className="h-4 w-6" viewBox="0 0 24 16" stroke="#fff" strokeWidth="2.400">
              <path d="M0 1.500h24M0 8h24M0 14.500h24" />
            </svg>
          </button>
          <button aria-label="Collapse panel" className="absolute left-0 top-[276px] flex h-[45px] w-6 items-center justify-center rounded-r-[4px] bg-[#616161] text-white shadow-[0_1px_3px_rgba(0,0,0,0.4)]">
            <Chevron dir="left" className="h-[18px] w-[11px]" />
          </button>
          <DistrictCard />
          <button aria-label="More" className="absolute right-[9px] top-[10px] flex h-12 w-12 items-center justify-center rounded-lg bg-[#4c4c4c] shadow-[0_2px_8px_rgba(0,0,0,0.4)]">
            <svg className="h-[21px] w-[6px]" viewBox="0 0 6 21" fill="#fff">
              <circle cx="3" cy="3" r="2.800" />
              <circle cx="3" cy="10.500" r="2.800" />
              <circle cx="3" cy="18" r="2.800" />
            </svg>
          </button>
          <div className="absolute bottom-[42px] right-[6px] flex w-10 flex-col gap-[2px] text-white">
            <button aria-label="Zoom in" className="flex h-10 items-center justify-center rounded-t-lg rounded-b-[2px] bg-[#525252]">
              <svg className="h-[18px] w-[18px]" viewBox="0 0 18 18" stroke="currentColor" strokeWidth="2.400">
                <path d="M0 9h18M9 0v18" />
              </svg>
            </button>
            <button aria-label="Zoom out" className="flex h-10 items-center justify-center rounded-b-lg rounded-t-[2px] bg-[#525252]">
              <svg className="h-[18px] w-[18px]" viewBox="0 0 18 18" stroke="currentColor" strokeWidth="2.400">
                <path d="M0 9h18" />
              </svg>
            </button>
            <button aria-label="Full screen" className="mt-[3px] flex h-10 items-center justify-center rounded-lg bg-[#525252]">
              <svg className="h-6 w-6" viewBox="0 0 24 24" fill="none" stroke="currentColor" strokeWidth="3">
                <path d="M1.500 8.500v-7h7M15.500 1.500h7v7M22.500 15.500v7h-7M8.500 22.500h-7v-7" />
              </svg>
            </button>
          </div>
        </div>
        <AttributeTable />
      </main>
    </div>
  );
}
